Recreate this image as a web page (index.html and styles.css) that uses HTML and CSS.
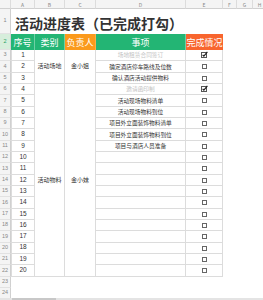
FILE: index.html
```html
<!DOCTYPE html>
<html lang="zh">
<head>
<meta charset="utf-8">
<title>活动进度表</title>
<link rel="stylesheet" href="styles.css">
</head>
<body>
<div class="sheet">
  <div class="corner"></div>
  <div class="ch">A</div><div class="ch">B</div><div class="ch">C</div><div class="ch">D</div><div class="ch">E</div><div class="ch">F</div><div class="ch">G</div><div class="ch">H</div>

  <div class="rh">1</div>
  <div class="title">活动进度表（已完成打勾）</div>

  <div class="rh sel">2</div>
  <div class="hd green">序号</div>
  <div class="hd green">类别</div>
  <div class="hd orange">负责人</div>
  <div class="hd green">事项</div>
  <div class="hd red">完成情况</div>
  <div class="rest"></div>

  <div class="rh">3</div><div class="c num">1</div>
  <div class="c merge m3">活动场地</div>
  <div class="c merge m3">金小姐</div>
  <div class="c task done">场地租赁合同签订</div><div class="c chk"><svg class="box" viewBox="0 0 7 7"><rect x="0.5" y="1.5" width="5" height="5" fill="none" stroke="#555"/><path d="M1.6 3.8 L2.9 5.1 L6.4 0.8" fill="none" stroke="#222" stroke-width="1.2"/></svg></div><div class="rest"></div>

  <div class="rh">4</div><div class="c num">2</div>
  <div class="c task">确定酒店停车路线及位数</div><div class="c chk"><span class="sq"></span></div><div class="rest"></div>

  <div class="rh">5</div><div class="c num">3</div>
  <div class="c task">确认酒店活动提供物料</div><div class="c chk"><span class="sq"></span></div><div class="rest"></div>

  <div class="rh">6</div><div class="c num">4</div>
  <div class="c merge m17">活动物料</div>
  <div class="c merge m17">金小妹</div>
  <div class="c task done">邀请函印制</div><div class="c chk"><svg class="box" viewBox="0 0 7 7"><rect x="0.5" y="1.5" width="5" height="5" fill="none" stroke="#555"/><path d="M1.6 3.8 L2.9 5.1 L6.4 0.8" fill="none" stroke="#222" stroke-width="1.2"/></svg></div><div class="rest"></div>

  <div class="rh">7</div><div class="c num">5</div>
  <div class="c task">活动现场物料清单</div><div class="c chk"><span class="sq"></span></div><div class="rest"></div>

  <div class="rh">8</div><div class="c num">6</div>
  <div class="c task">活动现场物料到位</div><div class="c chk"><span class="sq"></span></div><div class="rest"></div>

  <div class="rh">9</div><div class="c num">7</div>
  <div class="c task">项目外立面装饰物料清单</div><div class="c chk"><span class="sq"></span></div><div class="rest"></div>

  <div class="rh">10</div><div class="c num">8</div>
  <div class="c task">项目外立面装饰物料到位</div><div class="c chk"><span class="sq"></span></div><div class="rest"></div>

  <div class="rh">11</div><div class="c num">9</div>
  <div class="c task">项目与酒店人员准备</div><div class="c chk"><span class="sq"></span></div><div class="rest"></div>

  <div class="rh">12</div><div class="c num">10</div>
  <div class="c task"></div><div class="c chk"><span class="sq"></span></div><div class="rest"></div>

  <div class="rh">13</div><div class="c num">11</div>
  <div class="c task"></div><div class="c chk"><span class="sq"></span></div><div class="rest"></div>

  <div class="rh">14</div><div class="c num">12</div>
  <div class="c task"></div><div class="c chk"><span class="sq"></span></div><div class="rest"></div>

  <div class="rh">15</div><div class="c num">13</div>
  <div class="c task"></div><div class="c chk"><span class="sq"></span></div><div class="rest"></div>

  <div class="rh">16</div><div class="c num">14</div>
  <div class="c task"></div><div class="c chk"><span class="sq"></span></div><div class="rest"></div>

  <div class="rh">17</div><div class="c num">15</div>
  <div class="c task"></div><div class="c chk"><span class="sq"></span></div><div class="rest"></div>

  <div class="rh">18</div><div class="c num">16</div>
  <div class="c task"></div><div class="c chk"><span class="sq"></span></div><div class="rest"></div>

  <div class="rh">19</div><div class="c num">17</div>
  <div class="c task"></div><div class="c chk"><span class="sq"></span></div><div class="rest"></div>

  <div class="rh">20</div><div class="c num">18</div>
  <div class="c task"></div><div class="c chk"><span class="sq"></span></div><div class="rest"></div>

  <div class="rh">21</div><div class="c num">19</div>
  <div class="c task"></div><div class="c chk"><span class="sq"></span></div><div class="rest"></div>

  <div class="rh">22</div><div class="c num">20</div>
  <div class="c task"></div><div class="c chk"><span class="sq"></span></div><div class="rest"></div>

  <div class="rh">23</div><div class="empty"></div>
  <div class="rh">24</div><div class="empty"></div>
</div>
<div class="scrollbar"><span class="thumb"></span></div>
</body>
</html>
```
FILE: styles.css
```css
html, body {
  margin: 0;
  padding: 0;
  background: #fff;
  overflow: hidden;
  width: 263px;
  height: 300px;
}

body {
  font-family: "Noto Sans CJK SC", "Noto Sans", sans-serif;
  color: #333;
  position: relative;
}

.sheet {
  display: grid;
  width: 267px;
  grid-template-columns: 11px 24px 30px 31px 90px 37px 14px 16px 14px;
  grid-template-rows: 9px 25px 16px repeat(20, 11.333px) 11px 11px;
}

.corner,
.ch {
  background: #f4f4f4;
  border-right: 1px solid #dcdcdc;
  border-bottom: 1px solid #d0d0d0;
  box-sizing: border-box;
}

.ch {
  font-size: 5px;
  color: #888;
  display: flex;
  align-items: center;
  justify-content: center;
  line-height: 1;
}

.rh {
  grid-column: 1;
  background: #f4f4f4;
  border-right: 1px solid #d0d0d0;
  border-bottom: 1px solid #e2e2e2;
  box-sizing: border-box;
  font-family: "Liberation Sans", sans-serif;
  font-size: 5.5px;
  color: #888;
  display: flex;
  align-items: center;
  justify-content: center;
  line-height: 1;
}

.rh.sel {
  background: #d7eedc;
  color: #1f9e5c;
}

.title {
  grid-column: 2 / span 8;
  font-size: 14px;
  font-weight: 700;
  color: #333;
  display: flex;
  align-items: center;
  padding-left: 4px;
  padding-top: 2px;
  line-height: 1;
  white-space: nowrap;
}

.hd {
  color: #fff;
  font-size: 9px;
  line-height: 1;
  display: flex;
  align-items: center;
  justify-content: center;
  border-right: 1px solid rgba(255, 255, 255, 0.35);
  box-sizing: border-box;
  white-space: nowrap;
}

.hd.green { background: #23b574; }
.hd.orange { background: #fb9a1c; border-right-color: rgba(255,255,255,0.2); }
.hd.red { background: #f8652e; border-right: 0; }

.rest {
  grid-column: span 4;
}

.empty {
  grid-column: 2 / span 9;
}

.c {
  border-right: 1px solid #dcdcdc;
  border-bottom: 1px solid #dcdcdc;
  box-sizing: border-box;
  display: flex;
  align-items: center;
  justify-content: center;
  line-height: 1;
  white-space: nowrap;
  overflow: hidden;
}

.num {
  border-left: 1px solid #dcdcdc;
  font-family: "Liberation Sans", sans-serif;
  font-size: 6.5px;
  color: #333;
}

.merge {
  font-size: 6px;
  color: #333;
}

.m3 { grid-row: span 3; }
.m17 { grid-row: span 17; }

.task {
  font-size: 5.7px;
  color: #333;
}

.task.done {
  color: #c4c4c4;
}

.box {
  width: 7px;
  height: 7px;
  margin-left: 1px;
  margin-top: -1px;
}

.sq {
  width: 5px;
  height: 5px;
  border: 1px solid #666;
  box-sizing: border-box;
  margin-top: 1px;
}

.scrollbar {
  position: absolute;
  left: 0;
  right: 0;
  bottom: 0;
  height: 2px;
  background: #e4e4e4;
}

.thumb {
  display: block;
  margin-left: 12px;
  width: 44px;
  height: 2px;
  background: #c8c8c8;
}
```
